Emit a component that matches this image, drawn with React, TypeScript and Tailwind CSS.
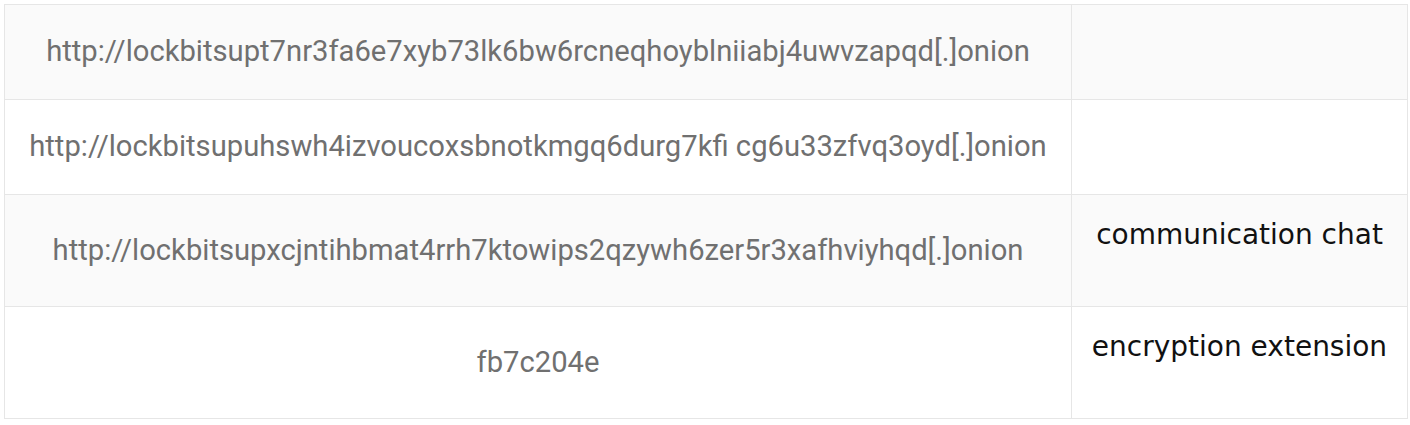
import React from "react";

const rows: { left: string; right: string; bg: string; h: string }[] = [
  { left: "http://lockbitsupt7nr3fa6e7xyb73lk6bw6rcneqhoyblniiabj4uwvzapqd[.]onion", right: "", bg: "bg-[#fafafa]", h: "h-[95px]" },
  { left: "http://lockbitsupuhswh4izvoucoxsbnotkmgq6durg7kfi cg6u33zfvq3oyd[.]onion", right: "", bg: "bg-white", h: "h-[95px]" },
  { left: "http://lockbitsupxcjntihbmat4rrh7ktowips2qzywh6zer5r3xafhviyhqd[.]onion", right: "communication chat", bg: "bg-[#fafafa]", h: "h-[112px]" },
  { left: "fb7c204e", right: "encryption extension", bg: "bg-white", h: "h-[112px]" },
];

export default function App() {
  return (
    <div className="w-[1410px] h-[425px] bg-white pt-[4px] pl-[4px]">
      <div className="w-[1404px] border-t border-l border-[#e6e6e6]">
        {rows.map((r, i) => (
          <div key={i} className={`flex ${r.bg} border-b border-[#e6e6e6] ${r.h}`}>
            <div className="w-[1067px] border-r border-[#e6e6e6] flex items-center justify-center text-[29.2px] text-[#707070] font-['Roboto',sans-serif] whitespace-nowrap">
              {r.left}
            </div>
            <div className="flex-1 border-r border-[#e6e6e6] flex justify-center pt-[20px] text-[28px] leading-[1.4] text-[#111] font-['DejaVu_Sans',sans-serif] whitespace-nowrap">
              {r.right}
            </div>
          </div>
        ))}
      </div>
    </div>
  );
}
